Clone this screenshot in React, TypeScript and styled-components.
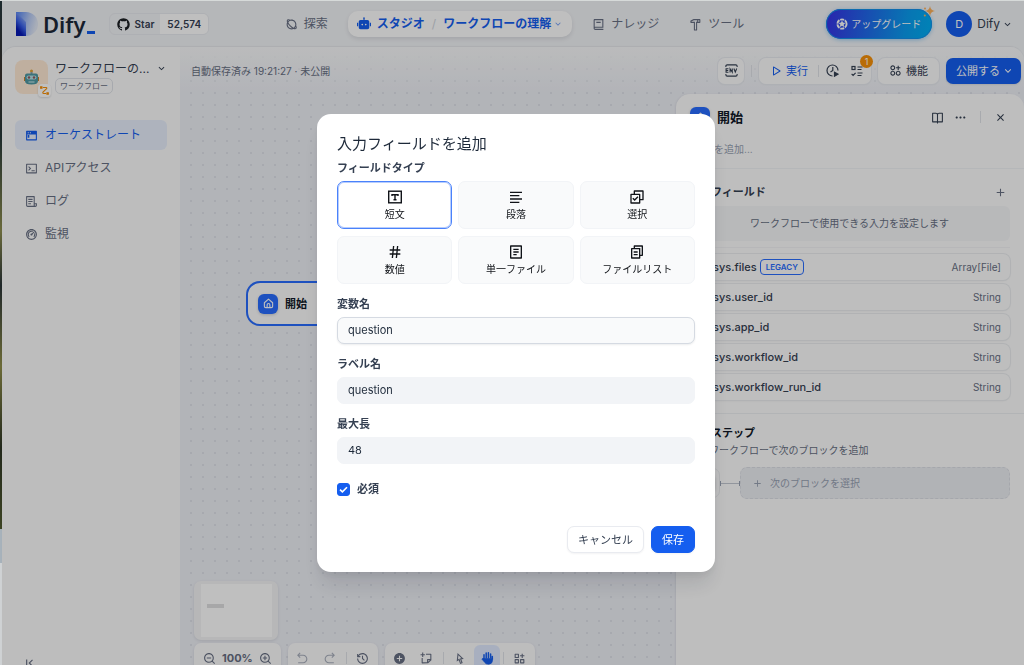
import React from 'react';
import styled, { createGlobalStyle, css } from 'styled-components';
import {
  RiAddCircleFill,
  RiAddLine,
  RiAlignLeft,
  RiApps2AddLine,
  RiArrowDownSLine,
  RiArrowGoBackLine,
  RiArrowGoForwardLine,
  RiBook2Line,
  RiBookOpenLine,
  RiCheckboxMultipleLine,
  RiCloseLine,
  RiCursorLine,
  RiDashboard2Line,
  RiFileCopy2Line,
  RiFileList2Line,
  RiFileList3Line,
  RiFunctionAddLine,
  RiGithubFill,
  RiHammerLine,
  RiHashtag,
  RiHistoryLine,
  RiMoreFill,
  RiPlanetLine,
  RiPlayLargeLine,
  RiRobot2Fill,
  RiSkipLeftLine,
  RiStickyNoteAddLine,
  RiTerminalBoxLine,
  RiTerminalWindowFill,
  RiZoomInLine,
  RiZoomOutLine,
} from 'react-icons/ri';

const c = {
  text: '#354052',
  strong: '#101828',
  muted: '#676f83',
  faint: '#98a2b3',
  blue: '#155eef',
  line: '#e9ebf0',
  soft: '#f2f4f7',
};

const GlobalStyle = createGlobalStyle`
  * { box-sizing: border-box; }
  body {
    margin: 0;
    overflow: hidden;
    font-family: Inter, "Noto Sans CJK JP", sans-serif;
    font-size: 11px;
    line-height: 16px;
    color: ${c.text};
  }
  button, input { font: inherit; color: inherit; margin: 0; }
  button { border: 0; background: none; padding: 0; cursor: pointer; white-space: nowrap; }
  a { color: inherit; text-decoration: none; }
  h1, h2, h3, p, ul { margin: 0; padding: 0; list-style: none; font-size: inherit; font-weight: inherit; }
  svg { display: block; flex: none; }
`;

const Desktop = styled.div`
  display: grid;
  grid-template-columns: 2px minmax(0, 1fr);
  height: 100vh;
  overflow: hidden;
  border-top: 1px solid #d6dad9;
`;

const Wallpaper = styled.div`
  background: linear-gradient(
    #1c2a2e 0%, #2b2420 12%, #1d2a2a 20%, #6a6a3c 34%, #20282a 42%, #6c6b38 54%,
    #23291c 66%, #3d4424 78%, #a7b2bb 78%, #a7b2bb 83%, #cfd2d4 83%
  );
`;

const Page = styled.div`
  display: flex;
  flex-direction: column;
  height: calc(100vh + 12px);
  background: #f2f4f7;
`;

/* ---------- top navigation ---------- */

const TopBar = styled.header`
  display: flex;
  align-items: center;
  flex: none;
  height: 46px;
  padding: 0 11px 0 14px;
`;

const TopSide = styled.div<{ $end?: boolean }>`
  display: flex;
  flex: 1;
  align-items: center;
  justify-content: ${p => (p.$end ? 'flex-end' : 'flex-start')};
  gap: 14px;
`;

const Brand = styled.a`
  display: flex;
  align-items: center;
  gap: 5px;
  color: #1d2939;
`;

const BrandName = styled.span`
  display: flex;
  align-items: flex-end;
  gap: 1px;
  font-family: "Noto Sans", Inter, sans-serif;
  font-size: 22px;
  line-height: 26px;
  font-weight: 600;
`;

const BrandCursor = styled.i`
  width: 8px;
  height: 3px;
  margin-bottom: 3px;
  background: ${c.blue};
`;

const StarLink = styled.a`
  display: flex;
  height: 22px;
  align-items: center;
  border: 1px solid ${c.line};
  border-radius: 6px;
  overflow: hidden;
  font-size: 10px;
  font-weight: 600;
`;

const StarLabel = styled.span`
  display: flex;
  align-items: center;
  gap: 4px;
  padding: 0 6px;
`;

const StarCount = styled.span`
  padding: 3px 7px;
  background: #fff;
`;

const Menu = styled.nav`
  display: flex;
  align-items: center;
  gap: 10px;
`;

const MenuLink = styled.a`
  display: flex;
  align-items: center;
  gap: 6px;
  height: 26px;
  padding: 0 10px;
  font-size: 12px;
  color: ${c.muted};
`;

const MenuPill = styled.div`
  display: flex;
  align-items: center;
  height: 26px;
  gap: 7px;
  padding: 0 9px;
  border-radius: 10px;
  background: #fff;
  box-shadow: 0 2px 4px rgba(16, 24, 40, 0.1);
  font-size: 12px;
  font-weight: 600;
  color: ${c.blue};

  a { display: flex; align-items: center; gap: 6px; }
  a + span { color: #d0d5dd; font-weight: 400; }
  a:last-child { gap: 2px; }
  a:last-child svg { opacity: 0.6; }
`;

const Upgrade = styled.button`
  position: relative;
  display: flex;
  align-items: center;
  gap: 3px;
  height: 30px;
  padding: 0 11px 0 10px;
  border-radius: 15px;
  background: linear-gradient(100deg, #3538e8 5%, #0a9df0 75%, #00b0f4);
  box-shadow: inset 0 0 0 1px #1590ea, 0 1px 4px rgba(21, 144, 234, 0.4);
  color: #fff;
  font-size: 10px;

  > svg:last-child { position: absolute; top: -3px; right: -3px; }
`;

const Account = styled.button`
  display: flex;
  align-items: center;
  gap: 5px;
  font-size: 12px;

  svg { margin-left: -3px; }
`;

const Avatar = styled.span<{ $size: number }>`
  display: grid;
  place-items: center;
  width: ${p => p.$size}px;
  height: ${p => p.$size}px;
  border-radius: 50%;
  background: ${c.blue};
  color: #fff;
  font-size: 11px;
`;

/* ---------- workspace ---------- */

const Workspace = styled.div`
  display: flex;
  flex: 1;
  min-height: 0;
  overflow: hidden;
  border-radius: 14px 14px 0 0;
  box-shadow: 0 -1px 1px rgba(16, 24, 40, 0.05);
`;

const Sidebar = styled.aside`
  display: flex;
  flex-direction: column;
  width: 178px;
  flex: none;
  padding: 13px 13px 8px;
  background: #fdfdfd;
`;

const AppHeader = styled.div`
  display: flex;
  gap: 7px;
  margin-bottom: 26px;
`;

const AppIcon = styled.div`
  position: relative;
  display: grid;
  place-items: center;
  width: 33px;
  height: 34px;
  border-radius: 8px;
  background: #ffead5;
`;

const AppKind = styled.span`
  position: absolute;
  right: -3px;
  bottom: -3px;
  display: grid;
  place-items: center;
  width: 13px;
  height: 13px;
  border-radius: 4px;
  background: #fff;
  box-shadow: 0 1px 2px rgba(16, 24, 40, 0.15);
`;

const AppInfo = styled.div`
  flex: 1;
  min-width: 0;
`;

const AppName = styled.button`
  display: flex;
  width: 100%;
  align-items: center;
  justify-content: space-between;
  line-height: 17px;
  font-size: 12px;
`;

const AppTag = styled.span`
  display: inline-block;
  padding: 0 4px;
  border: 1px solid #dfe2e8;
  border-radius: 5px;
  font-size: 8px;
  line-height: 14px;
  color: ${c.muted};
`;

const SideMenu = styled.nav`
  display: grid;
  gap: 3px;
`;

const SideLink = styled.a<{ $active?: boolean }>`
  display: flex;
  align-items: center;
  gap: 7px;
  height: 30px;
  padding: 0 10px;
  border-radius: 6px;
  font-size: 12px;
  color: ${c.muted};
  ${p => p.$active && css`
    background: #e8effd;
    color: ${c.blue};
  `}
`;

const Collapse = styled.button`
  display: flex;
  margin: auto 0 0 7px;
  color: ${c.muted};
`;

const Canvas = styled.main`
  position: relative;
  display: flex;
  flex: 1;
  flex-direction: column;
  min-width: 0;
  background:
    linear-gradient(#f9fafb, rgba(240, 242, 247, 0) 46px),
    radial-gradient(circle, #dfe2ea 1px, transparent 1px) 5px 4px / 12px 12px,
    #eef0f6;
`;

const CanvasBar = styled.div`
  display: flex;
  align-items: center;
  flex: none;
  gap: 7px;
  height: 47px;
  padding: 0 3px 0 11px;
`;

const SaveState = styled.p`
  flex: 1;
  font-size: 10px;
  color: ${c.muted};
`;

const Divider = styled.i`
  width: 1px;
  height: 12px;
  background: #e0e3e9;
`;

const box = css`
  display: flex;
  align-items: center;
  height: 26px;
  border-radius: 7px;
  background: #fcfcfd;
  box-shadow: 0 0 0 1px ${c.line}, 0 1px 2px rgba(16, 24, 40, 0.06);
`;

const BarButton = styled.button<{ $primary?: boolean }>`
  ${box}
  gap: 4px;
  padding: 0 11px;
  ${p => p.$primary && css`
    gap: 2px;
    padding: 0 7px 0 10px;
    background: ${c.blue};
    color: #fff;
    box-shadow: 0 1px 2px rgba(16, 24, 40, 0.1);
  `}
`;

const IconButton = styled.button`
  ${box}
  justify-content: center;
  width: 26px;
`;

const RunGroup = styled.div`
  ${box}
  position: relative;
  gap: 7px;
  padding: 0 8px 0 11px;

  button { display: flex; align-items: center; gap: 4px; }
  button:first-child { color: ${c.blue}; margin-right: 3px; }
  button:nth-of-type(3) { margin-left: 5px; }
`;

const Count = styled.span`
  position: absolute;
  top: -3px;
  right: -2px;
  width: 13px;
  height: 13px;
  border-radius: 50%;
  background: #f79009;
  color: #fff;
  font-size: 9px;
  line-height: 13px;
  text-align: center;
`;

const CanvasBody = styled.div`
  display: flex;
  flex: 1;
  min-height: 0;
`;

const Stage = styled.div`
  position: relative;
  display: flex;
  flex: 1;
  flex-direction: column;
  justify-content: flex-end;
  align-items: flex-start;
  gap: 3px;
  padding: 0 0 5px 14px;
`;

const StartNode = styled.div`
  position: absolute;
  left: 66px;
  top: 187px;
  display: flex;
  align-items: center;
  gap: 7px;
  width: 202px;
  height: 45px;
  padding: 0 10px;
  border: 2px solid #296dff;
  border-radius: 14px;
  background: #fcfcfd;
  font-weight: 700;
  color: ${c.strong};
`;

const HomeBadge = styled.span`
  display: grid;
  place-items: center;
  width: 20px;
  height: 20px;
  border-radius: 6px;
  background: #296dff;
  box-shadow: 0 1px 3px rgba(16, 24, 40, 0.2);
  color: #fff;
`;

const MiniMap = styled.div`
  width: 84px;
  height: 59px;
  padding: 3px 6px 3px 7px;
  border-radius: 7px;
  background: #f4f5f6;
  box-shadow: 0 1px 3px rgba(16, 24, 40, 0.1);
`;

const MiniView = styled.div`
  height: 100%;
  padding: 20px 6px;
  background: #fff;

  i { display: block; width: 17px; height: 4px; background: #dfdfe0; }
`;

const Tools = styled.div`
  display: flex;
  gap: 7px;
`;

const ToolGroup = styled.div<{ $gap?: number }>`
  display: flex;
  align-items: center;
  gap: ${p => p.$gap ?? 0}px;
  height: 30px;
  padding: 0 2px;
  border-radius: 7px;
  background: #fcfcfd;
  box-shadow: 0 1px 3px rgba(16, 24, 40, 0.1);
  color: ${c.muted};

  ${Divider} { margin: 0 2px; }
`;

const Tool = styled.button<{ $state?: 'off' | 'on' }>`
  display: grid;
  place-items: center;
  width: 26px;
  height: 26px;
  border-radius: 6px;
  ${p => p.$state === 'off' && css`color: #a9afbc;`}
  ${p => p.$state === 'on' && css`
    background: #e0eaff;
    color: ${c.blue};
  `}
`;

/* ---------- node panel ---------- */

const Panel = styled.section`
  flex: none;
  width: 348px;
  border-radius: 14px 14px 0 0;
  background: #fefefe;
  box-shadow: -1px 0 2px rgba(16, 24, 40, 0.06);
`;

const PanelHead = styled.div`
  padding: 13px 13px 0 14px;
  height: 75px;
  border-bottom: 1px solid #f2f4f7;
`;

const PanelTitle = styled.div`
  display: flex;
  align-items: center;
  gap: 10px;
  padding-right: 4px;
  color: ${c.text};

  h2 { flex: 1; margin-left: -3px; font-size: 13px; line-height: 20px; font-weight: 700; color: ${c.strong}; }
  button { display: flex; }
  i { margin: 0 3px; }
`;

const PanelHint = styled.p`
  padding: 14px 0 0 4px;
  font-size: 10px;
  color: ${c.faint};
`;

const PanelSection = styled.div`
  padding: 13px 14px 13px 13px;
  border-bottom: 1px solid #eef0f3;
`;

const SectionHead = styled.div`
  display: flex;
  align-items: center;
  justify-content: space-between;
  height: 20px;
  padding-right: 3px;

  h3 { font-weight: 700; }
  button { display: flex; color: ${c.muted}; }
`;

const EmptyInputs = styled.p`
  margin: 4px 0 6px;
  border-radius: 6px;
  background: #f6f7f9;
  font-size: 10px;
  line-height: 35px;
  text-align: center;
  color: ${c.muted};
`;

const Variables = styled.ul`
  display: grid;
  gap: 4px;
  padding-top: 6px;
  border-top: 1px solid #f4f5f7;
`;

const Variable = styled.li`
  display: flex;
  align-items: center;
  gap: 3px;
  height: 26px;
  padding: 0 9px;
  border-radius: 7px;
  background: #fefefe;
  box-shadow: 0 0 0 1px #eceef1, 0 1px 2px rgba(16, 24, 40, 0.08);
  color: ${c.text};

  > svg { color: ${c.blue}; }
  strong { font-weight: 500; }
  > span:last-child { margin-left: auto; font-size: 10px; color: ${c.muted}; }
`;

const Legacy = styled.span`
  padding: 0 5px;
  border: 1px solid #296dff;
  border-radius: 4px;
  font-size: 8px;
  line-height: 14px;
  font-weight: 600;
  color: #296dff;
`;

const NextSection = styled.div`
  padding: 11px 14px 0 13px;

  h3 { line-height: 17px; font-weight: 700; color: ${c.strong}; }
  p { font-size: 10px; color: ${c.muted}; }
`;

const NextRow = styled.div`
  display: flex;
  align-items: center;
  margin-top: 9px;
`;

const NextSource = styled.div`
  display: grid;
  place-items: center;
  width: 31px;
  height: 30px;
  border: 1px solid #eceef1;
  border-radius: 7px;
`;

const NextLink = styled.i`
  width: 20px;
  height: 5px;
  border: solid #98a2b3;
  border-width: 0 1px;
  background: linear-gradient(#c3c8d2, #c3c8d2) center / 100% 1px no-repeat;
`;

const NextButton = styled.button`
  display: flex;
  flex: 1;
  align-items: center;
  gap: 7px;
  height: 32px;
  padding: 0 11px;
  border: 1px dashed #dcdfe6;
  border-radius: 7px;
  background: #edeff3;
  font-size: 10px;
  color: ${c.faint};
`;

/* ---------- dialog ---------- */

const Overlay = styled.div`
  position: fixed;
  inset: 1px 0 0 2px;
  display: grid;
  place-items: center;
  padding: 20px 0 0 6px;
  background: rgba(0, 0, 0, 0.25);
`;

const Dialog = styled.form`
  width: 398px;
  max-width: 100%;
  padding: 18px 20px 19px;
  border-radius: 14px;
  background: #fff;
  box-shadow: 0 16px 20px -4px rgba(16, 24, 40, 0.12), 0 4px 6px rgba(16, 24, 40, 0.05);

  h1 { font-size: 15px; line-height: 24px; color: #1d2939; }
`;

const labelText = css`
  display: block;
  margin-bottom: 3px;
  line-height: 20px;
  font-weight: 600;
`;

const TypeGroup = styled.fieldset`
  margin: 2px 0 0;
  padding: 0;
  border: 0;

  legend { ${labelText} padding: 0; }
`;

const TypeGrid = styled.div`
  display: grid;
  grid-template-columns: repeat(3, 1fr);
  gap: 7px 6px;
`;

const TypeCard = styled.button<{ $selected?: boolean }>`
  display: flex;
  flex-direction: column;
  align-items: center;
  gap: 1px;
  height: 48px;
  padding-top: 7px;
  border: 1px solid #f2f4f7;
  border-radius: 7px;
  background: #f9fafb;
  font-size: 10px;
  color: #101318;
  ${p => p.$selected && css`
    border-color: #4a82fb;
    background: #fff;
    box-shadow: inset 0 0 0 1px rgba(74, 130, 251, 0.4);
  `}
`;

const Field = styled.label`
  display: block;
  margin-top: 10px;

  span { ${labelText} }
`;

const TextInput = styled.input<{ $focused?: boolean }>`
  display: block;
  width: 100%;
  height: 27px;
  padding: 0 10px 2px;
  border: 1px solid ${p => (p.$focused ? '#d5dae2' : '#f2f4f7')};
  border-radius: 7px;
  background: ${p => (p.$focused ? '#f9fafb' : '#f2f4f7')};
  box-shadow: ${p => (p.$focused ? '0 1px 2px rgba(16, 24, 40, 0.08)' : 'none')};
  color: #1d2939;
  outline: none;
`;

const CheckRow = styled.label`
  display: flex;
  align-items: center;
  gap: 7px;
  margin-top: 16px;
  line-height: 18px;
  font-weight: 600;
`;

const CheckBox = styled.span`
  display: grid;

  input {
    appearance: none;
    width: 13px;
    height: 13px;
    border-radius: 3px;
    border: 1px solid #d0d5dd;
  }
  input:checked { background: ${c.blue}; border-color: ${c.blue}; }
  svg { pointer-events: none; }
  > * { grid-area: 1 / 1; place-self: center; }
`;

const Actions = styled.div`
  display: flex;
  justify-content: flex-end;
  gap: 7px;
  margin-top: 28px;
`;

const ActionButton = styled.button<{ $primary?: boolean }>`
  height: 27px;
  padding: 0 10px;
  border: 1px solid ${p => (p.$primary ? c.blue : c.line)};
  border-radius: 7px;
  background: ${p => (p.$primary ? c.blue : '#fff')};
  box-shadow: 0 1px 2px rgba(16, 24, 40, 0.05);
  color: ${p => (p.$primary ? '#fff' : c.text)};
`;

/* ---------- drawings ---------- */

const DifyMark = () => (
  <svg width="22" height="24" viewBox="0 0 22 24">
    <defs>
      <linearGradient id="bowl" x1="0" y1="0" x2="1" y2="0.3">
        <stop offset="0" stopColor="#4f82f5" />
        <stop offset="0.6" stopColor="#b3c8f5" />
        <stop offset="1" stopColor="#e2e9f6" />
      </linearGradient>
      <linearGradient id="stem" x1="0.7" y1="0" x2="0.2" y2="1">
        <stop offset="0" stopColor="#a9c2f7" />
        <stop offset="0.5" stopColor="#3a62ea" />
        <stop offset="0.8" stopColor="#0619b4" />
      </linearGradient>
    </defs>
    <path d="M0 0h10a12 12 0 0 1 0 24V12H0z" fill="url(#bowl)" />
    <path d="M0 0l10 10v14H0z" fill="url(#stem)" />
  </svg>
);

const UpgradeMark = () => (
  <svg width="12" height="12" viewBox="0 0 12 12">
    <circle cx="6" cy="6" r="4.600" fill="none" stroke="#fff" strokeWidth="1.900" strokeDasharray="4 .82" />
    <path d="M6 2.500l1 2.100 2.400.3-1.700 1.600.4 2.400L6 7.800 3.900 8.900l.4-2.400L2.600 4.900l2.400-.3z" fill="#fff" />
  </svg>
);

const Sparkle = () => (
  <svg width="12" height="12" viewBox="0 0 12 12" fill="#fdb05a">
    <path d="M7 0q.6 4.400 5 5-4.400.6-5 5-.6-4.400-5-5 4.400-.6 5-5z" />
    <circle cx="2" cy="2.500" r="1" />
    <circle cx="1.800" cy="9.500" r="1" />
  </svg>
);

const RobotFace = () => (
  <svg width="15" height="16" viewBox="0 0 15 16">
    <circle cx="7.500" cy="2" r="1.500" fill="#e0a33a" />
    <rect x="6.500" y="3" width="2" height="2" fill="#8aa0a8" />
    <path d="M0 8h15v4H0z" fill="#c9812f" />
    <path d="M3 4.500h9a2 2 0 0 1 2 2V12q0 3.500-6.500 3.500T1 12V6.500a2 2 0 0 1 2-2z" fill="#4f98a3" />
    <rect x="2.500" y="6.500" width="10" height="4" rx="2" fill="#b5dfe4" />
    <circle cx="5" cy="8.500" r="1.200" fill="#8f5a5c" />
    <circle cx="10" cy="8.500" r="1.200" fill="#8f5a5c" />
    <path d="M4.500 13h6" stroke="#d4eef0" strokeWidth="1.200" />
  </svg>
);

const FlowMark = () => (
  <svg width="9" height="9" viewBox="0 0 9 9" fill="none" stroke="#f79009" strokeWidth="1.100">
    <path d="M3 1.500h3.200q1 .2.400 1.200L3 6q-.6 1.300.600 1.500H6" />
    <rect x=".6" y=".8" width="1.400" height="1.400" fill="#f79009" />
    <rect x="6.900" y="6.800" width="1.400" height="1.400" fill="#f79009" />
  </svg>
);

const EnvMark = () => (
  <svg width="13" height="13" viewBox="0 0 12 12" fill="none" stroke="currentColor" strokeWidth="1">
    <path d="M.8 2.800V2A1.200 1.200 0 0 1 2 .8h8A1.200 1.200 0 0 1 11.200 2v.8M.8 9.200v.8A1.200 1.200 0 0 0 2 11.200h8a1.200 1.200 0 0 0 1.200-1.200v-.8" />
    <path d="M3.200 4.400H1v3.200h2.200M1 6h2M4.700 7.800V4.400l2 3.200V4.200M8.200 4.200l1.300 3.300 1.300-3.300" />
  </svg>
);

const ClockPlay = () => (
  <svg width="13" height="13" viewBox="0 0 13 13" fill="none" stroke="currentColor" strokeWidth="1.200">
    <path d="M6.500 12A5.500 5.500 0 1 1 12 6.500" />
    <path d="M6.800 3v3.500L4.500 8" />
    <path d="M8.500 8.200v4L12 10.200z" fill="currentColor" />
  </svg>
);

const Checklist = () => (
  <svg width="12" height="12" viewBox="0 0 12 12" fill="none" stroke="currentColor" strokeWidth="1.200">
    <rect x="1" y="1.500" width="3" height="3" />
    <path d="M6.500 2h5M6.500 4.500h4M6.500 8h5M6.500 10.500h4M.6 8.800l1.500 1.500 2.500-2.500" />
  </svg>
);

const HomeMark = () => (
  <svg width="11" height="11" viewBox="0 0 12 12" fill="none" stroke="currentColor" strokeWidth="1.200" strokeLinejoin="round">
    <path d="M1.500 5.200L6 1.300l4.500 3.900V9a1.500 1.500 0 0 1-1.500 1.500H3A1.500 1.500 0 0 1 1.500 9z" />
    <path d="M4.500 10.300V7.500a1.500 1.500 0 0 1 3 0v2.800" />
  </svg>
);

const TextBoxMark = () => (
  <svg width="16" height="16" viewBox="0 0 16 16" fill="none" stroke="currentColor" strokeWidth="1.400">
    <rect x="1.700" y="2.200" width="12.600" height="11.600" />
    <path d="M5 7V5.700h6V7M8 5.700v5M6.500 10.700h3" />
  </svg>
);

const VariableMark = () => (
  <svg width="12" height="12" viewBox="0 0 12 12" fill="none" stroke="currentColor">
    <path d="M3 1.500Q1.500 3 1.500 6T3 10.500M9 1.500Q10.500 3 10.500 6T9 10.500M4.500 4l3 4M7.500 4l-3 4" />
  </svg>
);

const Tick = () => (
  <svg width="9" height="9" viewBox="0 0 9 9" fill="none" stroke="#fff" strokeWidth="1.600">
    <path d="M1 4.600l2.400 2.300L8 2.200" />
  </svg>
);

const HandMark = () => (
  <svg width="14" height="14" viewBox="0 0 14 14" fill="none" stroke="currentColor" strokeWidth="1.500" strokeLinecap="round">
    <path d="M4 8V3.700M6.200 7V2M8.400 7V1.800M10.600 7V3M12.300 8V5.500" />
    <path d="M3.600 7.500h9V9q0 4-4 4.300Q5.800 13.500 4.300 11L1.800 8q1-1 1.800-.5z" fill="currentColor" strokeWidth=".6" />
  </svg>
);

/* ---------- data ---------- */

const sideLinks = [
  { label: 'オーケストレート', Icon: RiTerminalWindowFill, active: true },
  { label: 'APIアクセス', Icon: RiTerminalBoxLine },
  { label: 'ログ', Icon: RiFileList3Line },
  { label: '監視', Icon: RiDashboard2Line },
];

const variables = [
  { name: 'sys.files', type: 'Array[File]', legacy: true },
  { name: 'sys.user_id', type: 'String' },
  { name: 'sys.app_id', type: 'String' },
  { name: 'sys.workflow_id', type: 'String' },
  { name: 'sys.workflow_run_id', type: 'String' },
];

const fieldTypes = [
  { label: '短文', icon: <TextBoxMark />, selected: true },
  { label: '段落', icon: <RiAlignLeft size={16} /> },
  { label: '選択', icon: <RiCheckboxMultipleLine size={16} /> },
  { label: '数値', icon: <RiHashtag size={16} /> },
  { label: '単一ファイル', icon: <RiFileList2Line size={16} /> },
  { label: 'ファイルリスト', icon: <RiFileCopy2Line size={16} /> },
];

const fields = [
  { label: '変数名', value: 'question', focused: true },
  { label: 'ラベル名', value: 'question' },
  { label: '最大長', value: '48' },
];

export default function App() {
  return (
    <>
      <GlobalStyle />
      <Desktop>
        <Wallpaper />
        <Page>
          <TopBar>
            <TopSide>
              <Brand href="#">
                <DifyMark />
                <BrandName>Dify<BrandCursor /></BrandName>
              </Brand>
              <StarLink href="#">
                <StarLabel><RiGithubFill size={15} color="#1d2025" />Star</StarLabel>
                <StarCount>52,574</StarCount>
              </StarLink>
            </TopSide>
            <Menu>
              <MenuLink href="#"><RiPlanetLine size={13} />探索</MenuLink>
              <MenuPill>
                <a href="#"><RiRobot2Fill size={14} />スタジオ</a>
                <span>/</span>
                <a href="#">ワークフローの理解<RiArrowDownSLine size={10} /></a>
              </MenuPill>
              <MenuLink href="#"><RiBook2Line size={13} />ナレッジ</MenuLink>
              <MenuLink href="#"><RiHammerLine size={13} />ツール</MenuLink>
            </Menu>
            <TopSide $end>
              <Upgrade><UpgradeMark />アップグレード<Sparkle /></Upgrade>
              <Account><Avatar $size={26}>D</Avatar>Dify<RiArrowDownSLine size={11} /></Account>
            </TopSide>
          </TopBar>

          <Workspace>
            <Sidebar>
              <AppHeader>
                <AppIcon><RobotFace /><AppKind><FlowMark /></AppKind></AppIcon>
                <AppInfo>
                  <AppName>ワークフローの...<RiArrowDownSLine size={11} /></AppName>
                  <AppTag>ワークフロー</AppTag>
                </AppInfo>
              </AppHeader>
              <SideMenu>
                {sideLinks.map(({ label, Icon, active }) => (
                  <SideLink key={label} href="#" $active={active}><Icon size={13} />{label}</SideLink>
                ))}
              </SideMenu>
              <Collapse aria-label="折りたたむ"><RiSkipLeftLine size={14} /></Collapse>
            </Sidebar>

            <Canvas>
              <CanvasBar>
                <SaveState>自動保存済み 19:21:27 · 未公開</SaveState>
                <IconButton aria-label="環境変数"><EnvMark /></IconButton>
                <Divider />
                <RunGroup>
                  <button><RiPlayLargeLine size={12} />実行</button>
                  <Divider />
                  <button aria-label="実行履歴"><ClockPlay /></button>
                  <button aria-label="チェックリスト"><Checklist /></button>
                  <Count>1</Count>
                </RunGroup>
                <BarButton><RiApps2AddLine size={13} />機能</BarButton>
                <BarButton $primary>公開する<RiArrowDownSLine size={12} /></BarButton>
              </CanvasBar>
              <CanvasBody>
                <Stage>
                  <StartNode><HomeBadge><HomeMark /></HomeBadge>開始</StartNode>
                  <MiniMap><MiniView><i /></MiniView></MiniMap>
                  <Tools>
                    <ToolGroup>
                      <Tool aria-label="縮小"><RiZoomOutLine size={13} /></Tool>
                      <strong>100%</strong>
                      <Tool aria-label="拡大"><RiZoomInLine size={13} /></Tool>
                    </ToolGroup>
                    <ToolGroup $gap={1}>
                      <Tool $state="off" aria-label="元に戻す"><RiArrowGoBackLine size={13} /></Tool>
                      <Tool $state="off" aria-label="やり直す"><RiArrowGoForwardLine size={13} /></Tool>
                      <Divider />
                      <Tool aria-label="変更履歴"><RiHistoryLine size={13} /></Tool>
                    </ToolGroup>
                    <ToolGroup $gap={1}>
                      <Tool aria-label="ブロックを追加"><RiAddCircleFill size={13} /></Tool>
                      <Tool aria-label="メモを追加"><RiStickyNoteAddLine size={13} /></Tool>
                      <Divider />
                      <Tool aria-label="ポインター"><RiCursorLine size={13} /></Tool>
                      <Tool $state="on" aria-label="ハンド"><HandMark /></Tool>
                      <Divider />
                      <Tool aria-label="ブロックを整理"><RiFunctionAddLine size={13} /></Tool>
                    </ToolGroup>
                  </Tools>
                </Stage>

                <Panel>
                  <PanelHead>
                    <PanelTitle>
                      <HomeBadge><HomeMark /></HomeBadge>
                      <h2>開始</h2>
                      <button aria-label="ヘルプ"><RiBookOpenLine size={13} /></button>
                      <button aria-label="その他"><RiMoreFill size={13} /></button>
                      <Divider />
                      <button aria-label="閉じる"><RiCloseLine size={13} /></button>
                    </PanelTitle>
                    <PanelHint>説明を追加...</PanelHint>
                  </PanelHead>
                  <PanelSection>
                    <SectionHead>
                      <h3>入力フィールド</h3>
                      <button aria-label="追加"><RiAddLine size={13} /></button>
                    </SectionHead>
                    <EmptyInputs>ワークフローで使用できる入力を設定します</EmptyInputs>
                    <Variables>
                      {variables.map(v => (
                        <Variable key={v.name}>
                          <VariableMark />
                          <strong>{v.name}</strong>
                          {v.legacy && <Legacy>LEGACY</Legacy>}
                          <span>{v.type}</span>
                        </Variable>
                      ))}
                    </Variables>
                  </PanelSection>
                  <NextSection>
                    <h3>次のステップ</h3>
                    <p>このワークフローで次のブロックを追加</p>
                    <NextRow>
                      <NextSource><HomeBadge><HomeMark /></HomeBadge></NextSource>
                      <NextLink />
                      <NextButton><RiAddLine size={11} />次のブロックを選択</NextButton>
                    </NextRow>
                  </NextSection>
                </Panel>
              </CanvasBody>
            </Canvas>
          </Workspace>
        </Page>
      </Desktop>

      <Overlay>
        <Dialog role="dialog" aria-labelledby="dialog-title" onSubmit={e => e.preventDefault()}>
          <h1 id="dialog-title">入力フィールドを追加</h1>
          <TypeGroup>
            <legend>フィールドタイプ</legend>
            <TypeGrid>
              {fieldTypes.map(t => (
                <TypeCard key={t.label} type="button" $selected={t.selected} aria-pressed={!!t.selected}>
                  {t.icon}{t.label}
                </TypeCard>
              ))}
            </TypeGrid>
          </TypeGroup>
          {fields.map(f => (
            <Field key={f.label}>
              <span>{f.label}</span>
              <TextInput defaultValue={f.value} $focused={f.focused} />
            </Field>
          ))}
          <CheckRow>
            <CheckBox><input type="checkbox" defaultChecked /><Tick /></CheckBox>
            必須
          </CheckRow>
          <Actions>
            <ActionButton type="button">キャンセル</ActionButton>
            <ActionButton type="submit" $primary>保存</ActionButton>
          </Actions>
        </Dialog>
      </Overlay>
    </>
  );
}
